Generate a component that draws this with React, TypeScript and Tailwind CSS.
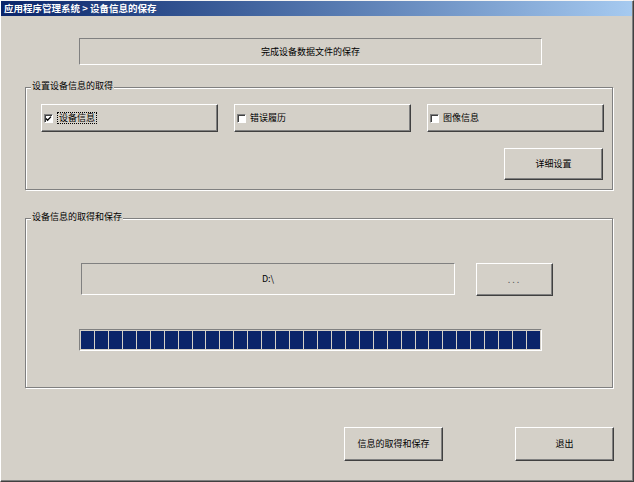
import React from 'react';

const RAISED =
  'border border-t-white border-l-white border-r-[#404040] border-b-[#404040] shadow-[inset_-1px_-1px_0_#808080] bg-[#d4d0c8]';
const SUNKEN = 'border border-t-[#808080] border-l-[#808080] border-r-white border-b-white';
const ETCHED = 'relative border border-[#808080] shadow-[inset_1px_1px_0_#fff,1px_1px_0_#fff]';

function Checkbox({ checked }: { checked?: boolean }) {
  return (
    <span className="flex h-[9px] w-[9px] items-center justify-center border border-t-[#808080] border-l-[#808080] border-r-white border-b-white bg-white shadow-[inset_1px_1px_0_#404040]">
      {checked && (
        <svg width="7" height="7" viewBox="0 0 7 7">
          <path d="M1 3.5 L2.6 5.2 L6 1.6" stroke="#000" strokeWidth="1.3" fill="none" />
        </svg>
      )}
    </span>
  );
}

function CheckButton({ label, checked, focused }: { label: string; checked?: boolean; focused?: boolean }) {
  return (
    <div className={`${RAISED} flex h-[28px] w-[177px] items-center gap-[4px] pl-[2px]`}>
      <Checkbox checked={checked} />
      <span className={focused ? 'border border-dotted border-black px-[1px] leading-[10px]' : 'leading-[10px]'}>
        {label}
      </span>
    </div>
  );
}

function GroupLabel({ text }: { text: string }) {
  return (
    <span className="absolute -top-[8px] left-[5px] bg-[#d4d0c8] px-[1px] leading-[12px]">{text}</span>
  );
}

export default function App() {
  const blocks = Array.from({ length: 33 });
  return (
    <div className="h-[482px] w-[634px] bg-[#d4d0c8] font-['Noto_Sans_CJK_SC','Noto_Sans',sans-serif] text-[9px] text-black">
      <div className="flex h-[482px] w-[634px] flex-col border-t border-l border-t-[#f4f4f4] border-l-white border-r border-b border-r-[#404040] border-b-[#404040] shadow-[inset_-1px_-1px_0_#808080]">
        {/* title bar */}
        <div className="flex h-[15px] w-[631px] items-center whitespace-pre bg-gradient-to-r from-[#0a246a] to-[#a6caf0] pl-[3px] text-[9.5px] font-bold text-white">
          {'应用程序管理系统 > 设备信息的保存'}
        </div>

        {/* status panel */}
        <div className={`${SUNKEN} ml-[78px] mt-[22px] flex h-[27px] w-[463px] items-center justify-center`}>
          完成设备数据文件的保存
        </div>

        {/* group 1 */}
        <div className={`${ETCHED} ml-[24px] mt-[22px] h-[103px] w-[588px]`}>
          <GroupLabel text="设置设备信息的取得" />
          <div className="flex flex-col pl-[15px] pt-[16px]">
            <div className="flex gap-[16px]">
              <CheckButton label="设备信息" checked focused />
              <CheckButton label="错误履历" />
              <CheckButton label="图像信息" />
            </div>
            <div className={`${RAISED} ml-[463px] mt-[16px] flex h-[32px] w-[99px] items-center justify-center`}>
              详细设置
            </div>
          </div>
        </div>

        {/* group 2 */}
        <div className={`${ETCHED} ml-[24px] mt-[28px] h-[170px] w-[588px]`}>
          <GroupLabel text="设备信息的取得和保存" />
          <div className="flex flex-col pt-[44px]">
            <div className="ml-[55px] flex items-start gap-[21px]">
              <div className={`${SUNKEN} flex h-[32px] w-[374px] items-center justify-center`}>{'D:\\'}</div>
              <div className={`${RAISED} flex h-[33px] w-[77px] items-center justify-center tracking-[2px] text-[#606060]`}>
                ...
              </div>
            </div>
            <div className={`${SUNKEN} ml-[53px] mt-[33px] flex h-[22px] w-[463px] gap-[1px] p-[1px]`}>
              {blocks.map((_, i) => (
                <div key={i} className="flex-1 bg-[#0a246a]" />
              ))}
            </div>
          </div>
        </div>

        {/* bottom buttons */}
        <div className="ml-[343px] mt-[39px] flex gap-[72px]">
          <div className={`${RAISED} flex h-[34px] w-[99px] items-center justify-center`}>信息的取得和保存</div>
          <div className={`${RAISED} flex h-[34px] w-[99px] items-center justify-center`}>退出</div>
        </div>
      </div>
    </div>
  );
}
